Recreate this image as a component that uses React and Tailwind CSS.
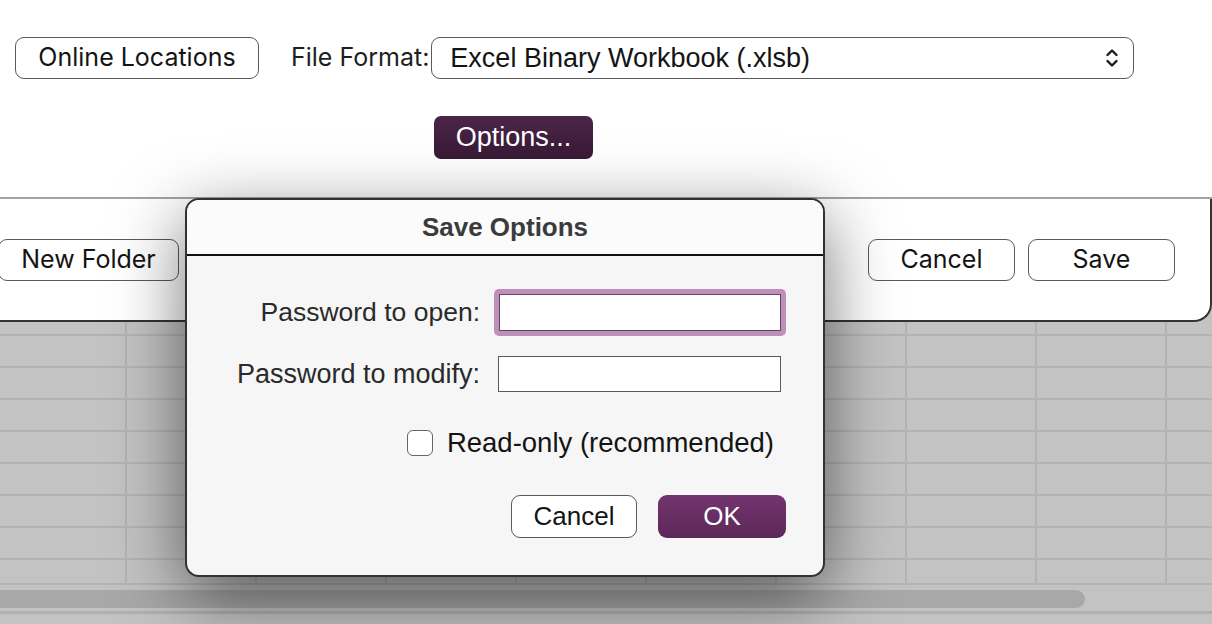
import React from 'react';

const ui = { fontFamily: 'Inter, "Liberation Sans", sans-serif' };
const helv = { fontFamily: '"Liberation Sans", Arial, sans-serif' };

const rows = [12, 32, 32, 32, 32, 32, 32, 32, 25];
const cols = [125, 130, 130, 130, 130, 130, 130, 130, 130, 130];

function Chevrons() {
  return (
    <svg width="14" height="22" viewBox="0 0 14 22" fill="none" stroke="#1a1a1a" strokeWidth="2.4" strokeLinecap="round" strokeLinejoin="round">
      <path d="M2.5 8 L7 3.5 L11.5 8" />
      <path d="M2.5 14 L7 18.5 L11.5 14" />
    </svg>
  );
}

function SheetButton({ children, className = '' }) {
  return (
    <button
      className={`h-[42px] rounded-[9px] border-[1.5px] border-[#5a5a5a] bg-white text-[25px] text-[#141414] flex items-center justify-center ${className}`}
      style={ui}
    >
      {children}
    </button>
  );
}

export default function App() {
  return (
    <div className="relative w-[1212px] h-[624px] overflow-hidden bg-[#c3c3c3]">
      {/* save sheet */}
      <div className="bg-white">
        <div className="h-[197px] flex flex-col">
          <div className="flex items-center pt-[37px]">
            <SheetButton className="ml-[15px] w-[244px]">Online Locations</SheetButton>
            <span className="ml-[32px] text-[25px] text-[#1e1e1e]" style={ui}>File Format:</span>
            <div className="ml-[2px] w-[703px] h-[42px] rounded-[9px] border-[1.5px] border-[#5a5a5a] flex items-center justify-between pl-[18px] pr-[14px]">
              <span className="text-[27px] text-[#141414]" style={helv}>Excel Binary Workbook (.xlsb)</span>
              <Chevrons />
            </div>
          </div>
          <div className="mt-[37px] ml-[434px]">
            <button
              className="w-[159px] h-[43px] rounded-[7px] bg-[linear-gradient(#4c2549,#381a36)] text-white text-[27px] flex items-center justify-center"
              style={helv}
            >
              Options...
            </button>
          </div>
        </div>
        <div className="h-[2px] bg-[#a3a3a3]" />
      </div>
      <div className="h-[123px] bg-white border-b-2 border-r-2 border-[#333] rounded-br-[18px] flex items-center">
        <SheetButton className="-ml-[2px] w-[181px]">New Folder</SheetButton>
        <SheetButton className="ml-auto w-[147px]">Cancel</SheetButton>
        <SheetButton className="ml-[13px] mr-[35px] w-[147px]">Save</SheetButton>
      </div>

      {/* spreadsheet behind */}
      <div className="flex flex-col">
        {rows.map((h, r) => (
          <div key={r} className={`flex ${r > 0 ? 'border-t-2 border-[#b3b3b3]' : ''}`} style={{ height: h }}>
            {cols.map((w, c) => (
              <div key={c} className={`shrink-0 ${c > 0 ? 'border-l-2 border-[#b3b3b3]' : ''}`} style={{ width: w }} />
            ))}
          </div>
        ))}
        <div className="h-[28px] border-t-2 border-[#b3b3b3] pt-[5px]">
          <div className="w-[1085px] h-[18px] rounded-r-full bg-[#a8a8a8]" />
        </div>
        <div className="h-[3px] bg-[#b0b0b0]" />
        <div className="flex-1 bg-[#bdbdbd]" />
      </div>

      {/* Save Options dialog */}
      <div
        className="absolute left-[185px] top-[198px] w-[640px] h-[379px] rounded-[14px] border-2 border-[#323232] bg-[#f6f6f6] overflow-hidden shadow-[0_20px_70px_rgba(0,0,0,0.55)]"
        style={helv}
      >
        <div className="h-[56px] bg-[#fbfbfb] flex items-center justify-center border-b-2 border-[#111]">
          <span className="text-[26px] font-bold text-[#3b3b3b]">Save Options</span>
        </div>
        <div className="flex flex-col pt-[33px]">
          <div className="flex items-center h-[47px]">
            <span className="w-[293px] text-right text-[26.5px] text-[#2a2a2a]">Password to open:</span>
            <div className="ml-[14px] p-[5px] rounded-[5px] bg-[#bf8fbc]">
              <div className="w-[282px] h-[37px] bg-white border-[1.5px] border-[#5b4a5a]" />
            </div>
          </div>
          <div className="flex items-center h-[36px] mt-[20px]">
            <span className="w-[293px] text-right text-[27px] text-[#2a2a2a]">Password to modify:</span>
            <div className="ml-[18px] w-[283px] h-[36px] bg-white border-[1.5px] border-[#5a5a5a]" />
          </div>
          <div className="flex items-center justify-end h-[26px] mt-[38px] pr-[49px]">
            <div className="w-[26px] h-[26px] rounded-[6px] border-[1.5px] border-[#666] bg-white" />
            <span className="ml-[14px] text-[27.5px] text-[#141414]">Read-only (recommended)</span>
          </div>
          <div className="flex justify-end h-[43px] mt-[39px] pr-[37px]">
            <button className="w-[126px] h-[43px] rounded-[9px] border-[1.5px] border-[#5a5a5a] bg-white text-[26px] text-[#141414]">
              Cancel
            </button>
            <button className="ml-[21px] w-[128px] h-[43px] rounded-[9px] bg-[linear-gradient(#74346f,#5b2858)] text-white text-[26px]">
              OK
            </button>
          </div>
        </div>
      </div>
    </div>
  );
}
